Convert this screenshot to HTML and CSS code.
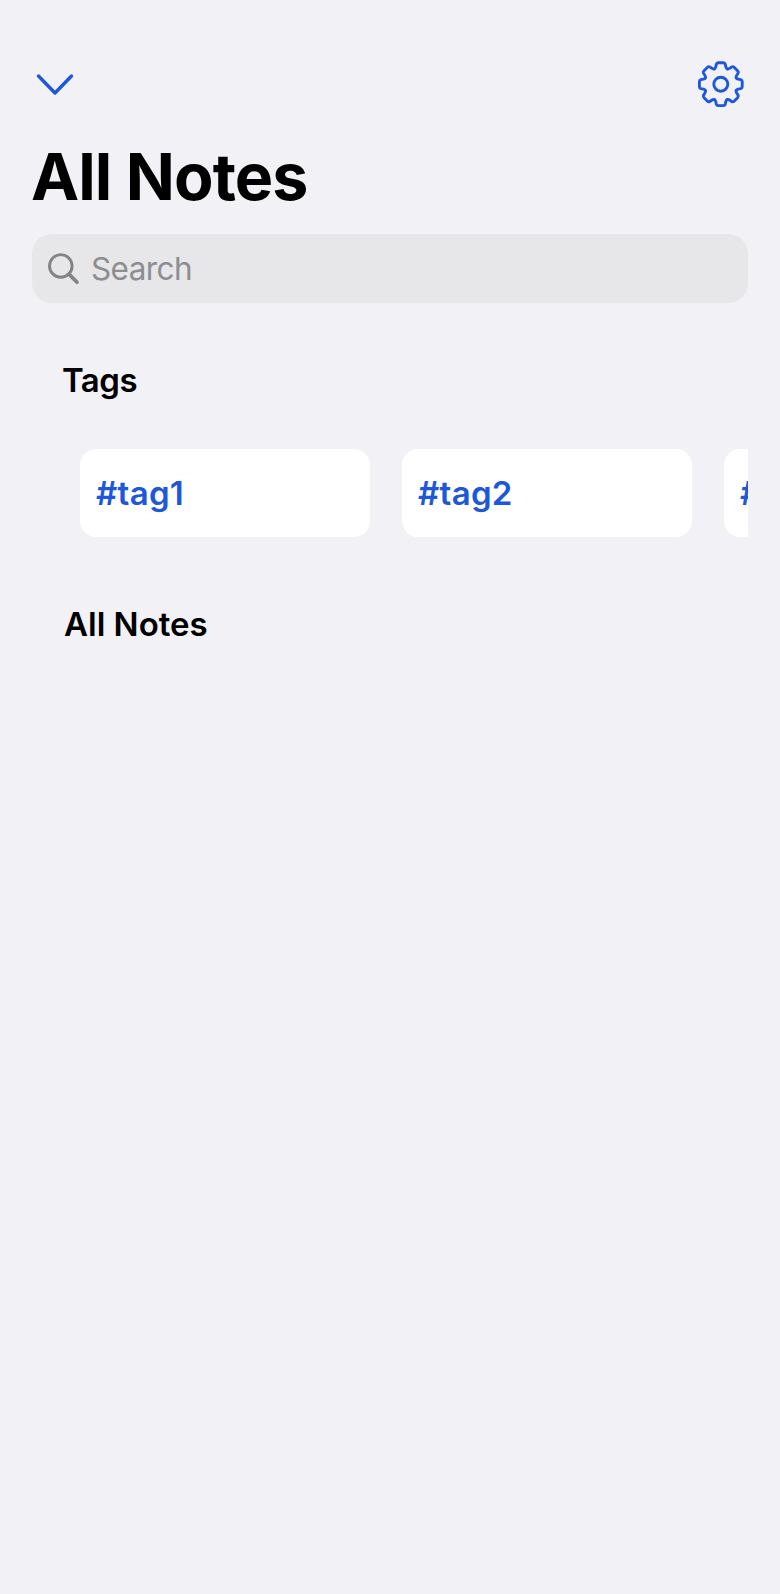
FILE: index.html
```
<!DOCTYPE html>
<html lang="en">
<head>
<meta charset="utf-8">
<title>All Notes</title>
<link rel="stylesheet" href="styles.css">
</head>
<body>
<main class="screen">
  <header class="toolbar">
    <svg class="icon chevron" viewBox="0 0 46 48" width="46" height="48"><path d="M6.5 16 L23 33 L39.5 16"/></svg>
    <svg class="icon gear" viewBox="-23.8 -24.2 48 48" width="48" height="48">
      <defs><path id="tooth" d="M-6.4 -15.4 Q-5.3 -15.9 -5 -17.4 L-4.5 -19.9 Q-4.1 -21.4 -2.6 -21.4 H2.6 Q4.1 -21.4 4.5 -19.9 L5 -17.4 Q5.3 -15.9 6.4 -15.4"/></defs>
      <use href="#tooth"/>
      <use href="#tooth" transform="rotate(45)"/>
      <use href="#tooth" transform="rotate(90)"/>
      <use href="#tooth" transform="rotate(135)"/>
      <use href="#tooth" transform="rotate(180)"/>
      <use href="#tooth" transform="rotate(225)"/>
      <use href="#tooth" transform="rotate(270)"/>
      <use href="#tooth" transform="rotate(315)"/>
      <circle r="7"/>
    </svg>
  </header>
  <h1 class="title">All Notes</h1>
  <div class="search">
    <svg class="magnifier" viewBox="0 0 32 32" width="32" height="32"><circle cx="12.8" cy="12.9" r="11.3"/><path class="handle" d="M21.2 21.4 L29 29.2"/></svg>
    <span class="placeholder">Search</span>
  </div>
  <h2 class="section tags-heading">Tags</h2>
  <div class="tags">
    <div class="tag">#tag1</div>
    <div class="tag">#tag2</div>
    <div class="tag">#tag3</div>
  </div>
  <h2 class="section notes-heading">All Notes</h2>
</main>
</body>
</html>
```
FILE: styles.css
```
* { box-sizing: border-box; }
body {
  margin: 0;
  background: #f1f1f6;
  font-family: Inter, "Liberation Sans", sans-serif;
  color: #000;
}
.screen {
  width: 780px;
  height: 1594px;
  padding: 60px 32px 0;
  overflow: hidden;
}
.toolbar {
  display: flex;
  justify-content: space-between;
  height: 48px;
  padding-right: 3px;
}
.icon {
  fill: none;
  stroke: #1d57db;
  stroke-linecap: round;
  stroke-linejoin: round;
}
.chevron { stroke-width: 3.4; }
.gear { stroke-width: 2.9; }
.title {
  margin: 29px 0 17px -1px;
  height: 80px;
  line-height: 80px;
  font-size: 64.5px;
  font-weight: 700;
  letter-spacing: -0.9px;
}
.search {
  display: flex;
  align-items: center;
  gap: 11px;
  height: 69px;
  padding-left: 16px;
  border-radius: 20px;
  background: #e7e7e9;
}
.magnifier {
  fill: none;
  stroke: #838387;
  stroke-width: 2.9;
  stroke-linecap: round;
}
.handle { stroke-width: 3.7; }
.placeholder {
  font-size: 31.5px;
  letter-spacing: -0.6px;
  color: #8d8d92;
}
.section {
  margin: 0;
  height: 44px;
  line-height: 44px;
  font-size: 33px;
  font-weight: 600;
}
.tags-heading {
  margin: 55px 0 47px 30px;
  letter-spacing: -0.5px;
}
.notes-heading {
  margin: 65px 0 0 32px;
  letter-spacing: 0;
}
.tags {
  display: flex;
  gap: 32px;
  padding-left: 48px;
  overflow: hidden;
}
.tag {
  flex: none;
  width: 290px;
  height: 88px;
  padding-left: 16px;
  line-height: 88px;
  border-radius: 16px;
  background: #fff;
  color: #1d57db;
  font-size: 33px;
  font-weight: 600;
  letter-spacing: 0.3px;
}
```
